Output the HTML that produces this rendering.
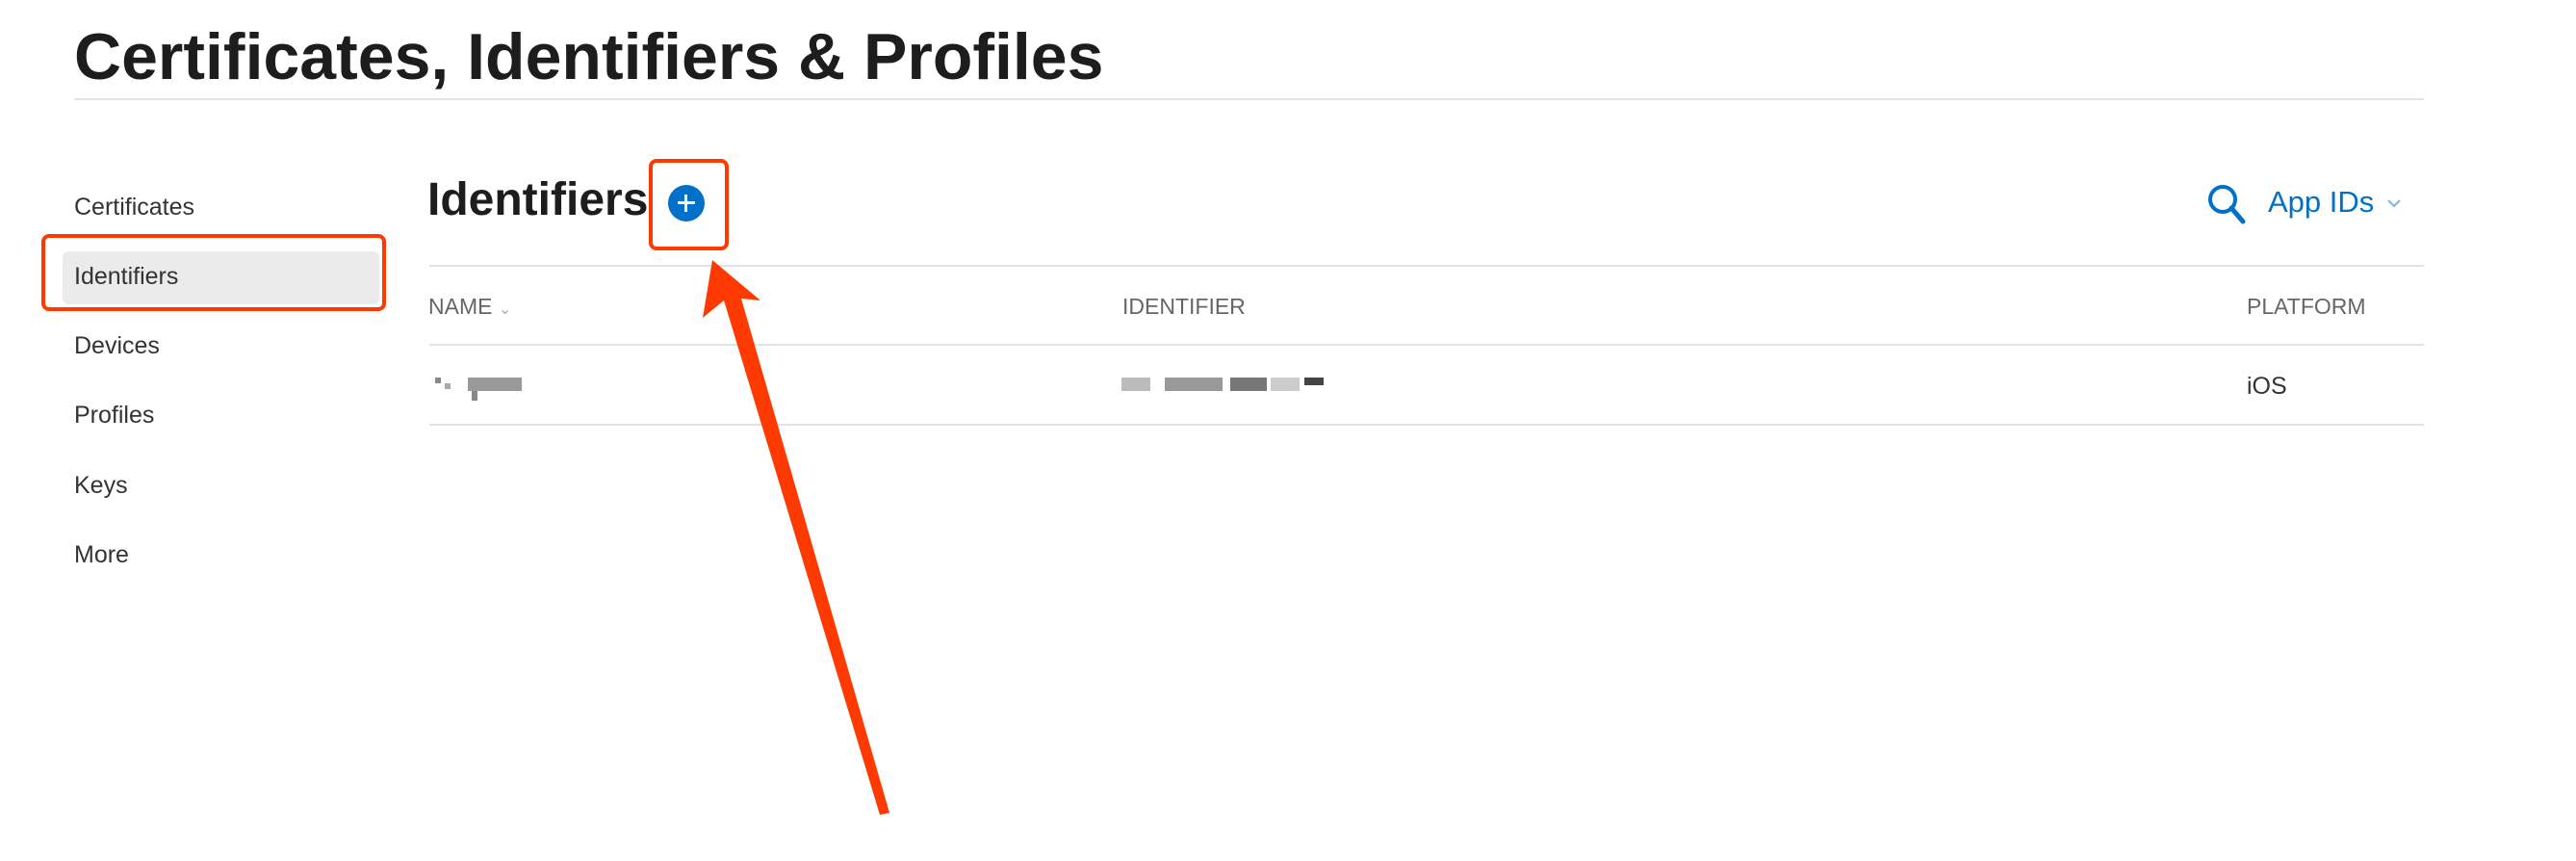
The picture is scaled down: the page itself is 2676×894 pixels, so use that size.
<!DOCTYPE html>
<html><head><style>
body{margin:0;width:2676px;height:894px;background:#fff;font-family:"Liberation Sans",sans-serif;position:relative;overflow:hidden;color:#1d1d1f}
div,span{position:absolute}
.t{left:77px;top:20px;font-size:68px;font-weight:bold;letter-spacing:0px;color:#1d1d1f;white-space:nowrap}
.hr{height:2px;background:#e2e2e2}
.nav{left:77px;font-size:25px;color:#333}
.th{font-size:23px;color:#666;top:305px}
.px{background:#999}
</style></head><body>
<div class="t">Certificates, Identifiers &amp; Profiles</div>
<div class="hr" style="left:77px;top:102px;width:2441px"></div>

<div style="left:65px;top:261px;width:329px;height:55px;background:#ebebeb;border-radius:6px"></div>
<div style="left:43px;top:243px;width:350px;height:72px;border:4px solid #ff3a00;border-radius:8px"></div>
<div class="nav" style="top:201px">Certificates</div>
<div class="nav" style="top:273px">Identifiers</div>
<div class="nav" style="top:345px">Devices</div>
<div class="nav" style="top:417px">Profiles</div>
<div class="nav" style="top:490px">Keys</div>
<div class="nav" style="top:562px">More</div>

<div style="left:444px;top:180px;font-size:48px;font-weight:bold;color:#1d1d1f">Identifiers</div>
<div style="left:694px;top:192px;width:38px;height:38px;border-radius:50%;background:#0070c9"></div>
<div style="left:711px;top:202px;width:3px;height:18px;background:#fff"></div>
<div style="left:704px;top:209px;width:18px;height:3px;background:#fff"></div>
<div style="left:674px;top:165px;width:75px;height:87px;border:4px solid #ff3a00;border-radius:8px"></div>

<svg style="position:absolute;left:2290px;top:188px" width="50" height="50"><circle cx="19" cy="19" r="13" fill="none" stroke="#0070c9" stroke-width="4"/><line x1="28" y1="28" x2="40" y2="42" stroke="#0070c9" stroke-width="5" stroke-linecap="round"/></svg>
<div style="left:2356px;top:192px;font-size:31px;color:#0070c9">App IDs</div>
<svg style="position:absolute;left:2479px;top:205px" width="16" height="12"><polyline points="2,3 8,9 14,3" fill="none" stroke="#7fb4e3" stroke-width="2"/></svg>

<div class="hr" style="left:446px;top:275px;width:2072px"></div>
<div class="hr" style="left:446px;top:357px;width:2072px"></div>
<div class="hr" style="left:446px;top:440px;width:2072px"></div>
<div class="th" style="left:445px">NAME <span style="position:relative;font-size:16px;color:#aaa">&#8964;</span></div>
<div class="th" style="left:1166px">IDENTIFIER</div>
<div class="th" style="left:2334px">PLATFORM</div>
<div style="left:2334px;top:387px;font-size:25px;color:#333">iOS</div>

<div class="px" style="left:452px;top:392px;width:6px;height:6px;background:#888"></div>
<div class="px" style="left:462px;top:398px;width:6px;height:6px;background:#aaa"></div>
<div class="px" style="left:486px;top:392px;width:56px;height:14px;background:#999"></div>
<div class="px" style="left:490px;top:406px;width:6px;height:10px;background:#888"></div>
<div class="px" style="left:1165px;top:392px;width:30px;height:14px;background:#bbb"></div>
<div class="px" style="left:1210px;top:392px;width:60px;height:14px;background:#999"></div>
<div class="px" style="left:1278px;top:392px;width:38px;height:14px;background:#777"></div>
<div class="px" style="left:1320px;top:392px;width:30px;height:14px;background:#ccc"></div>
<div class="px" style="left:1355px;top:392px;width:20px;height:8px;background:#444"></div>

<svg style="position:absolute;left:0;top:0" width="2676" height="894"><polygon points="740,270 790,312 770,310 924,844 914,846 752,312 730,330" fill="#ff3a00"/></svg>
</body></html>
